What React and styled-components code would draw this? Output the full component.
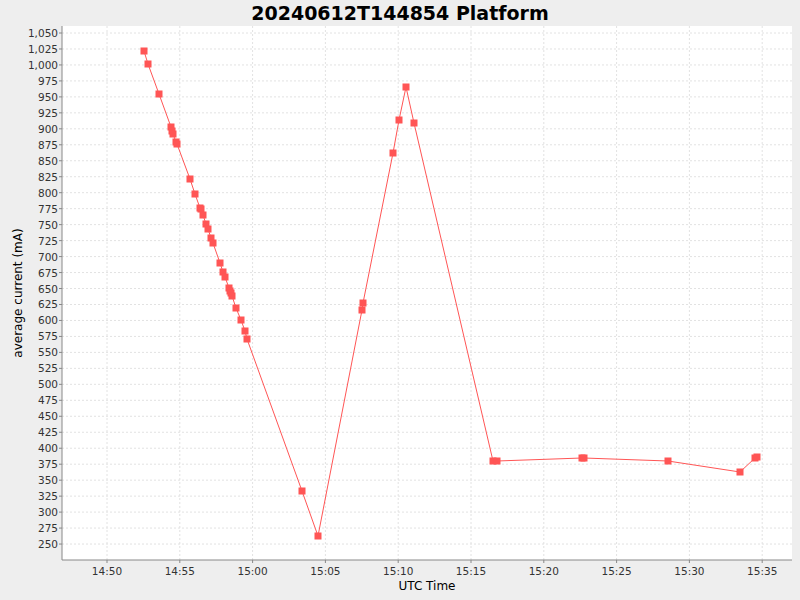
import React from "react";
import styled, { createGlobalStyle } from "styled-components";

const G = createGlobalStyle`body{margin:0;background:#eeeeee;font-family:"DejaVu Sans",sans-serif;}`;
const Page = styled.div`width:800px;height:600px;display:flex;flex-direction:column;background:#eee;`;
const Title = styled.h1`margin:0;height:26px;line-height:26px;text-align:center;font-size:19px;font-weight:bold;color:#000;`;

const pts = [[144,51],[148,64],[159,94],[171,127],[172,131],[173,134],[176,142],[177,144],[190,179],[195,194],[200,208],[201,209],[203,215],[206,224],[208,229],[211,238],[213,243],[220,263],[223,272],[225,277],[229,288],[230,291],[231,293],[232,296],[236,308],[241,320],[245,331],[247,339],[302,491],[318,536],[362,310],[363,303],[393,153],[399,120],[406,87],[414,123],[493,461],[497,461],[582,458],[584,458],[668,461],[740,472],[755,458],[757,457]];
const L=62,T=26,R=792,B=560;
const yv = v => 33 + (1050 - v) * 0.6388;
const xm = m => 107 + m * 14.56;
const yt = []; for (let v = 250; v <= 1050; v += 25) yt.push(v);
const xt = []; for (let m = 0; m <= 45; m += 5) xt.push(m);
const fmt = v => v >= 1000 ? "1," + String(v - 1000).padStart(3, "0") : String(v);
const xl = m => { const t = 14*60+50+m; return `${Math.floor(t/60)}:${String(t%60).padStart(2,"0")}`; };

export default function App() {
  return (
    <Page>
      <G />
      <Title>20240612T144854 Platform</Title>
      <svg width="800" height="574" viewBox="0 26 800 574" style={{display:"block"}} fontFamily="DejaVu Sans, sans-serif">
        <rect x={L} y={T} width={R-L} height={B-T} fill="#fff" />
        {yt.map(v => <line key={v} x1={L} x2={R} y1={yv(v)} y2={yv(v)} stroke="#e2e2e2" strokeDasharray="2 2" />)}
        {xt.map(m => <line key={m} y1={T} y2={B} x1={xm(m)} x2={xm(m)} stroke="#e2e2e2" strokeDasharray="2 2" />)}
        <polyline points={pts.map(p=>p.join(",")).join(" ")} fill="none" stroke="#ff5555" strokeWidth="1" />
        {pts.map((p,i)=><rect key={i} x={p[0]-3.5} y={p[1]-3.5} width="7" height="7" fill="#ff5555" />)}
        <line x1={L} x2={L} y1={T} y2={B} stroke="#888" />
        <line x1={L} x2={R} y1={B} y2={B} stroke="#888" />
        {yt.map(v => <g key={v}><line x1={L-3} x2={L} y1={yv(v)} y2={yv(v)} stroke="#888"/><text x={L-4} y={yv(v)+4} fontSize="10.5" textAnchor="end" fill="#333">{fmt(v)}</text></g>)}
        {xt.map(m => <g key={m}><line y1={B} y2={B+3} x1={xm(m)} x2={xm(m)} stroke="#888"/><text x={xm(m)} y={B+15} fontSize="10.5" textAnchor="middle" fill="#333">{xl(m)}</text></g>)}
        <text x="427" y="590" fontSize="12" textAnchor="middle" fill="#000">UTC Time</text>
        <text transform="translate(22,293) rotate(-90)" fontSize="12" textAnchor="middle" fill="#000">average current (mA)</text>
      </svg>
    </Page>
  );
}
